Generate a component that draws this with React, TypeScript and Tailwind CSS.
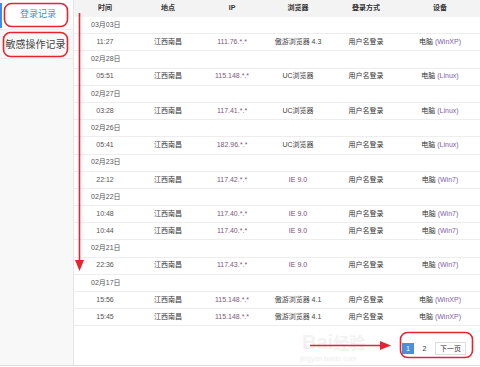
import React from "react";

type Row =
  | { d: string }
  | { t: string; loc: string; ip: string; br: string; ie?: boolean; dev: string };

const rows: Row[] = [
  { d: "03月03日" },
  { t: "11:27", loc: "江西南昌", ip: "111.76.*.*", br: "傲游浏览器 4.3", dev: "WinXP" },
  { d: "02月28日" },
  { t: "05:51", loc: "江西南昌", ip: "115.148.*.*", br: "UC浏览器", dev: "Linux" },
  { d: "02月27日" },
  { t: "03:28", loc: "江西南昌", ip: "117.41.*.*", br: "UC浏览器", dev: "Linux" },
  { d: "02月26日" },
  { t: "05:41", loc: "江西南昌", ip: "182.96.*.*", br: "UC浏览器", dev: "Linux" },
  { d: "02月23日" },
  { t: "22:12", loc: "江西南昌", ip: "117.42.*.*", br: "IE 9.0", ie: true, dev: "Win7" },
  { d: "02月22日" },
  { t: "10:48", loc: "江西南昌", ip: "117.40.*.*", br: "IE 9.0", ie: true, dev: "Win7" },
  { t: "10:44", loc: "江西南昌", ip: "117.40.*.*", br: "IE 9.0", ie: true, dev: "Win7" },
  { d: "02月21日" },
  { t: "22:36", loc: "江西南昌", ip: "117.43.*.*", br: "IE 9.0", ie: true, dev: "Win7" },
  { d: "02月17日" },
  { t: "15:56", loc: "江西南昌", ip: "115.148.*.*", br: "傲游浏览器 4.1", dev: "WinXP" },
  { t: "15:45", loc: "江西南昌", ip: "115.148.*.*", br: "傲游浏览器 4.1", dev: "WinXP" },
];

const grid = "grid grid-cols-[62px_64px_64px_68px_68px_1fr] items-center";

export default function App() {
  return (
    <div
      className="relative w-[480px] h-[367px] bg-white overflow-hidden"
      style={{ fontFamily: '"Liberation Sans", "Noto Sans CJK SC", sans-serif' }}
    >
      <div className="flex h-[366px] border-b border-[#dddddd]">
        {/* Sidebar */}
        <div className="w-[74px] shrink-0 bg-[#f8f8f8] border-r border-[#e6e6e6] flex flex-col">
          <div className="relative h-[30px] bg-white border-b border-[#ececec] flex items-center justify-center">
            <div className="absolute left-0 top-[3px] bottom-[1px] w-[2px] bg-[#3d8ce8]" />
            <span className="text-[9px] text-[#3a8ee6] pl-[3px] pt-[1px]">登录记录</span>
          </div>
          <div className="h-[29px] border-b border-[#ececec] flex items-center justify-center">
            <span className="text-[10px] text-[#444444] pr-[2px]">敏感操作记录</span>
          </div>
        </div>

        {/* Main */}
        <div className="flex-1 flex flex-col text-[7px]">
          <div className={`${grid} h-[17px] bg-[#f3f3f3] font-bold text-[#333333] text-center`}>
            <div>时间</div>
            <div>地点</div>
            <div>IP</div>
            <div>浏览器</div>
            <div>登录方式</div>
            <div>设备</div>
          </div>
          {rows.map((r, i) =>
            "d" in r ? (
              <div
                key={i}
                className="h-[17.2px] border-b border-[#ededed] flex items-center pl-[17px] text-[#555555]"
              >
                {r.d}
              </div>
            ) : (
              <div key={i} className={`${grid} h-[17.2px] border-b border-[#ededed] text-center`}>
                <div className="text-[#555555]">{r.t}</div>
                <div className="text-[#333333]">{r.loc}</div>
                <div className="text-[#7b5a7a]">{r.ip}</div>
                <div className={r.ie ? "text-[#7b4a78]" : "text-[#444444]"}>{r.br}</div>
                <div className="text-[#333333]">用户名登录</div>
                <div className="text-[#333333]">
                  电脑 <span className="text-[#7d62a8]">({r.dev})</span>
                </div>
              </div>
            )
          )}
          {/* Pagination */}
          <div className="flex-1 relative">
            <div className="absolute left-[228px] top-[6px] text-[20px] font-bold text-[#f2f2f2] leading-none select-none">
              Bai<span className="text-[16px]">经验</span>
            </div>
            <div className="absolute left-[226px] top-[28px] text-[7px] text-[#eeeeee] select-none">
              jingyan.baidu.com
            </div>
            <div className="relative flex justify-end items-center gap-[5px] pr-[14px] pt-[16px]">
              <div className="w-[12px] h-[11px] bg-[#4a8fd9] text-white flex items-center justify-center text-[7px]">
                1
              </div>
              <div className="w-[11px] h-[11px] flex items-center justify-center text-[7px] text-[#333333]">
                2
              </div>
              <div className="h-[13px] px-[4px] border border-[#dddddd] flex items-center text-[7px] text-[#333333]">
                下一页
              </div>
            </div>
          </div>
        </div>
      </div>

      {/* Annotations */}
      <svg className="absolute inset-0 pointer-events-none" width="480" height="367" viewBox="0 0 480 367">
        <g fill="none" stroke="#e5242f" strokeWidth="1.6">
          <rect x="4.5" y="3.5" width="63" height="23" rx="7" />
          <rect x="3.5" y="32.5" width="64" height="24" rx="7" />
          <rect x="400.5" y="332.5" width="72" height="25" rx="7" />
          <line x1="79.5" y1="13" x2="79.5" y2="262" />
          <line x1="310" y1="345.5" x2="382" y2="345.5" />
        </g>
        <g fill="#e5242f">
          <polygon points="75,260 84,260 79.5,271" />
          <polygon points="380,341 380,350 391,345.5" />
        </g>
      </svg>
    </div>
  );
}
